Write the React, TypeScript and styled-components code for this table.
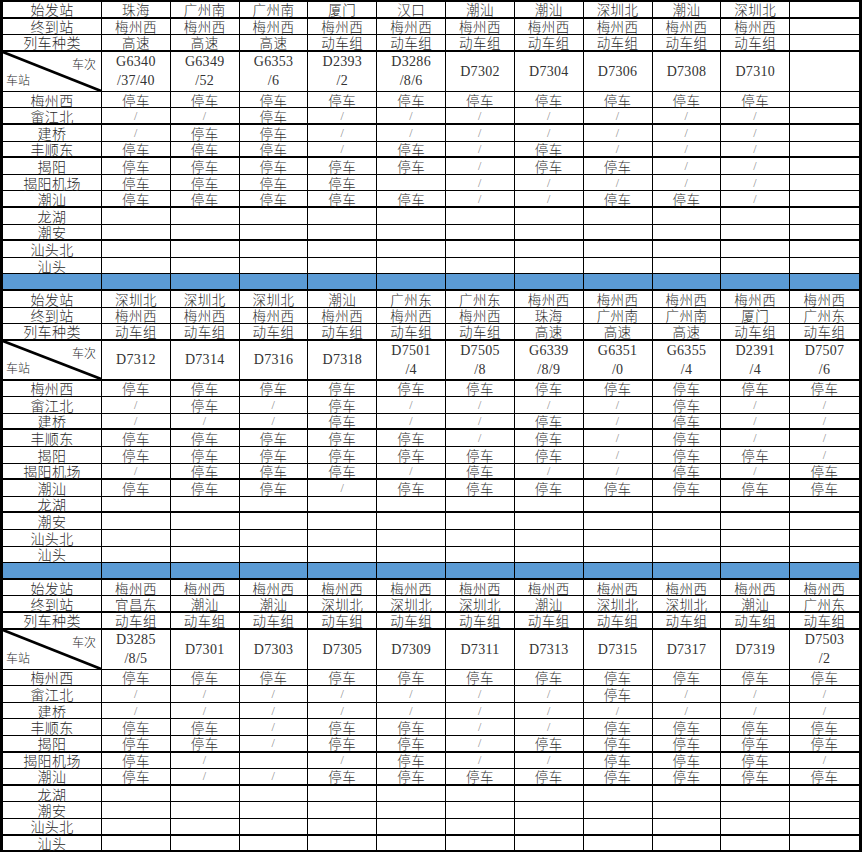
import styled, { createGlobalStyle } from "styled-components";

const GlobalStyle = createGlobalStyle`
  html, body {
    margin: 0;
    padding: 0;
    background: #fff;
  }
  body {
    font-family: "Noto Sans CJK SC", sans-serif;
  }
`;

const ROW_H = 16.6;
const TRAIN_H = 40;

const STATIONS = [
  "梅州西",
  "畲江北",
  "建桥",
  "丰顺东",
  "揭阳",
  "揭阳机场",
  "潮汕",
  "龙湖",
  "潮安",
  "汕头北",
  "汕头",
];

interface Train {
  from: string;
  to: string;
  kind: string;
  no: string;
  sub?: string;
  // S = 停车, / = 不停, - = 空
  stops: string;
}

interface Block {
  trains: (Train | null)[];
  // row indexes (0 = 始发站 ... 14 = 汕头) drawn with a heavy bottom rule
  thick: number[];
  band: boolean;
}

const BLOCKS: Block[] = [
  {
    thick: [0, 2, 5, 7, 10, 12],
    band: true,
    trains: [
      { from: "珠海", to: "梅州西", kind: "高速", no: "G6340", sub: "/37/40", stops: "S//SSSS" },
      { from: "广州南", to: "梅州西", kind: "高速", no: "G6349", sub: "/52", stops: "S/SSSSS" },
      { from: "广州南", to: "梅州西", kind: "高速", no: "G6353", sub: "/6", stops: "SSSSSSS" },
      { from: "厦门", to: "梅州西", kind: "动车组", no: "D2393", sub: "/2", stops: "S///SSS" },
      { from: "汉口", to: "梅州西", kind: "动车组", no: "D3286", sub: "/8/6", stops: "S//SS-S" },
      { from: "潮汕", to: "梅州西", kind: "动车组", no: "D7302", stops: "S//////" },
      { from: "潮汕", to: "梅州西", kind: "动车组", no: "D7304", stops: "S//SS//" },
      { from: "深圳北", to: "梅州西", kind: "动车组", no: "D7306", stops: "S///S/S" },
      { from: "潮汕", to: "梅州西", kind: "动车组", no: "D7308", stops: "S/////S" },
      { from: "深圳北", to: "梅州西", kind: "动车组", no: "D7310", stops: "S//////" },
      null,
    ],
  },
  {
    thick: [2, 3, 6, 9, 11],
    band: true,
    trains: [
      { from: "深圳北", to: "梅州西", kind: "动车组", no: "D7312", stops: "S//SS/S" },
      { from: "深圳北", to: "梅州西", kind: "动车组", no: "D7314", stops: "SS/SSSS" },
      { from: "深圳北", to: "梅州西", kind: "动车组", no: "D7316", stops: "S//SSSS" },
      { from: "潮汕", to: "梅州西", kind: "动车组", no: "D7318", stops: "SSSSSS/" },
      { from: "广州东", to: "梅州西", kind: "动车组", no: "D7501", sub: "/4", stops: "S//SS/S" },
      { from: "广州东", to: "梅州西", kind: "动车组", no: "D7505", sub: "/8", stops: "S///SSS" },
      { from: "梅州西", to: "珠海", kind: "高速", no: "G6339", sub: "/8/9", stops: "S/SSS/S" },
      { from: "梅州西", to: "广州南", kind: "高速", no: "G6351", sub: "/0", stops: "S/////S" },
      { from: "梅州西", to: "广州南", kind: "高速", no: "G6355", sub: "/4", stops: "SSSSSSS" },
      { from: "梅州西", to: "厦门", kind: "动车组", no: "D2391", sub: "/4", stops: "S///S/S" },
      { from: "梅州西", to: "广州东", kind: "动车组", no: "D7507", sub: "/6", stops: "S////SS" },
    ],
  },
  {
    thick: [1, 2, 8, 10, 13, 14],
    band: false,
    trains: [
      { from: "梅州西", to: "宜昌东", kind: "动车组", no: "D3285", sub: "/8/5", stops: "S//SSSS" },
      { from: "梅州西", to: "潮汕", kind: "动车组", no: "D7301", stops: "S//SS//" },
      { from: "梅州西", to: "潮汕", kind: "动车组", no: "D7303", stops: "S////-/" },
      { from: "梅州西", to: "深圳北", kind: "动车组", no: "D7305", stops: "S//SS/S" },
      { from: "梅州西", to: "深圳北", kind: "动车组", no: "D7309", stops: "S//SSSS" },
      { from: "梅州西", to: "深圳北", kind: "动车组", no: "D7311", stops: "S/////S" },
      { from: "梅州西", to: "潮汕", kind: "动车组", no: "D7313", stops: "S///S/S" },
      { from: "梅州西", to: "深圳北", kind: "动车组", no: "D7315", stops: "SS/SSSS" },
      { from: "梅州西", to: "深圳北", kind: "动车组", no: "D7317", stops: "S//SSSS" },
      { from: "梅州西", to: "潮汕", kind: "动车组", no: "D7319", stops: "S//SSSS" },
      { from: "梅州西", to: "广州东", kind: "动车组", no: "D7503", sub: "/2", stops: "S//SS/S" },
    ],
  },
];

const Sheet = styled.div`
  width: 862px;
  box-sizing: border-box;
  border-top: 2px solid #000;
  border-left: 3px solid #000;
  border-right: 3px solid #000;
  background: #fff;
`;

const Row = styled.div<{ $h: number; $thick?: boolean; $band?: boolean }>`
  display: grid;
  grid-template-columns: 99px repeat(11, 1fr);
  height: ${(p) => p.$h}px;
  box-sizing: border-box;
  border-bottom: ${(p) => (p.$thick ? 2 : 1)}px solid #000;
  background: ${(p) => (p.$band ? "#5b9bd5" : "#fff")};
`;

const Cell = styled.div`
  position: relative;
  display: flex;
  align-items: center;
  justify-content: center;
  border-right: 1px solid #000;
  white-space: nowrap;
  font-size: 13.5px;
  font-weight: 300;
  line-height: 14px;
  letter-spacing: 0.5px;
  color: #2a2a2a;
  box-sizing: border-box;
  min-width: 0;

  &:last-child {
    border-right: none;
  }
`;

const Label = styled(Cell)`
  font-size: 14px;
  letter-spacing: 0.4px;
`;

const Stop = styled.span`
  color: #333;
`;

const Slash = styled.span`
  font-family: "Liberation Serif", serif;
  font-size: 12px;
  color: #8a8a8a;
`;

const TrainCell = styled(Cell)`
  flex-direction: column;
  font-family: "Liberation Serif", "Noto Sans CJK SC", serif;
  font-size: 14px;
  font-weight: 400;
  line-height: 19px;
  letter-spacing: 0.3px;
  color: #333;
`;

const Corner = styled(Cell)`
  flex-direction: column;
  align-items: stretch;
  justify-content: space-between;
  padding: 5px 3px 5px 3px;
  font-size: 12px;
  line-height: 13px;
  letter-spacing: 0;
`;

const CornerTop = styled.span`
  align-self: flex-end;
  margin-right: 2px;
`;

const CornerBottom = styled.span`
  align-self: flex-start;
`;

const Diagonal = styled.svg`
  position: absolute;
  inset: 0;
  width: 100%;
  height: 100%;
`;

function StopMark({ code }: { code: string }) {
  if (code === "S") return <Stop>停车</Stop>;
  if (code === "/") return <Slash>/</Slash>;
  return null;
}

function TableBlock({ block }: { block: Block }) {
  const isThick = (i: number) => block.thick.includes(i);
  const heads: { label: string; key: "from" | "to" | "kind" }[] = [
    { label: "始发站", key: "from" },
    { label: "终到站", key: "to" },
    { label: "列车种类", key: "kind" },
  ];

  return (
    <>
      {heads.map((h, i) => (
        <Row key={h.key} $h={ROW_H} $thick={isThick(i)}>
          <Label>{h.label}</Label>
          {block.trains.map((t, j) => (
            <Cell key={j}>{t ? t[h.key] : ""}</Cell>
          ))}
        </Row>
      ))}

      <Row $h={TRAIN_H} $thick={isThick(3)}>
        <Corner>
          <Diagonal viewBox="0 0 100 40" preserveAspectRatio="none">
            <line x1="0" y1="0" x2="100" y2="40" stroke="#000" strokeWidth="2.6" vectorEffect="non-scaling-stroke" />
          </Diagonal>
          <CornerTop>车次</CornerTop>
          <CornerBottom>车站</CornerBottom>
        </Corner>
        {block.trains.map((t, j) => (
          <TrainCell key={j}>
            {t && <span>{t.no}</span>}
            {t && t.sub && <span>{t.sub}</span>}
          </TrainCell>
        ))}
      </Row>

      {STATIONS.map((s, k) => (
        <Row key={s} $h={ROW_H} $thick={isThick(4 + k)}>
          <Label>{s}</Label>
          {block.trains.map((t, j) => (
            <Cell key={j}>{t && <StopMark code={t.stops[k] ?? "-"} />}</Cell>
          ))}
        </Row>
      ))}

      {block.band && (
        <Row $h={ROW_H} $thick $band>
          {Array.from({ length: 12 }).map((_, j) => (
            <Cell key={j} />
          ))}
        </Row>
      )}
    </>
  );
}

export default function App() {
  return (
    <>
      <GlobalStyle />
      <Sheet>
        {BLOCKS.map((b, i) => (
          <TableBlock key={i} block={b} />
        ))}
      </Sheet>
    </>
  );
}
